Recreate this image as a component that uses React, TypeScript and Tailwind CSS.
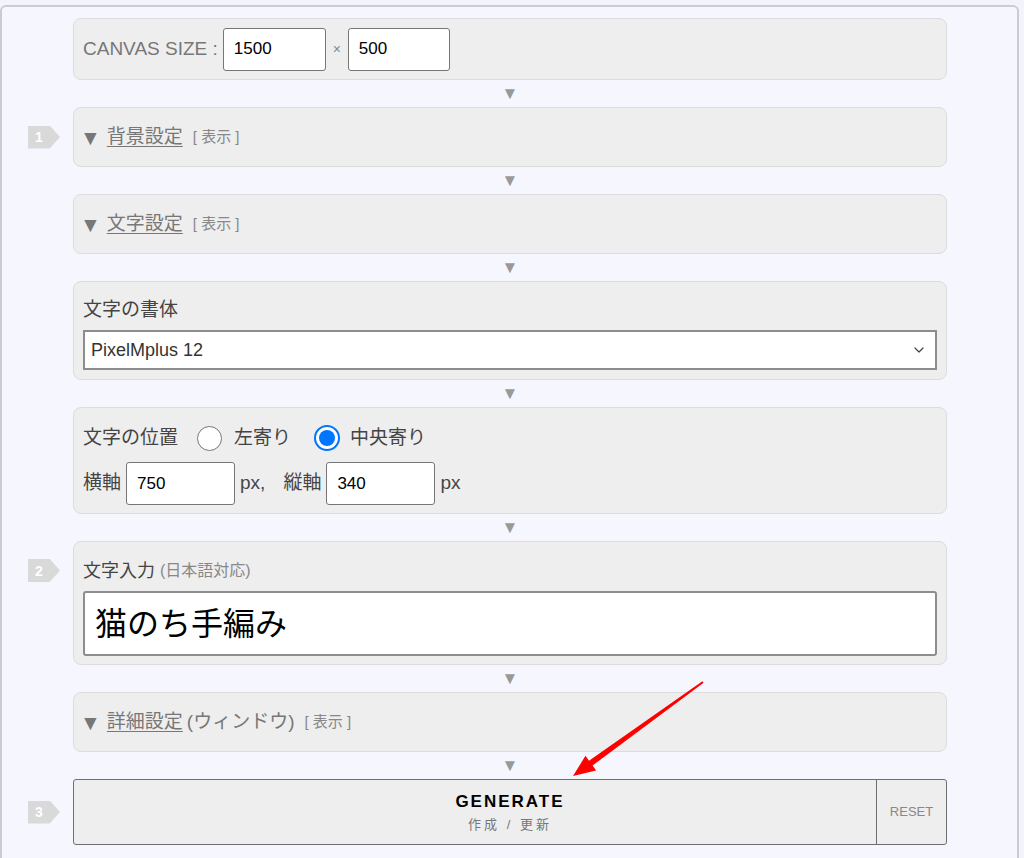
import { ChevronDown } from "lucide-react";

const font = "font-['Liberation_Sans','Noto_Sans_CJK_JP',sans-serif]";

function Badge({ n }: { n: string }) {
  return (
    <div className="w-[32px] h-[23px] bg-[#d9d9d9] [clip-path:polygon(0_0,68%_0,100%_50%,68%_100%,0_100%)] flex items-center pl-[7px] text-white text-[14px] font-bold leading-none">
      {n}
    </div>
  );
}

function Sep() {
  return (
    <div className="flex h-[27px]">
      <div className="w-[71px] shrink-0" />
      <div className="w-[874px] flex items-center justify-center text-[#999] text-[17px] leading-none">▼</div>
    </div>
  );
}

function Row({ badge, top, children }: { badge?: string; top?: boolean; children: React.ReactNode }) {
  return (
    <div className="flex">
      <div className={`w-[71px] shrink-0 flex pl-[26px] ${top ? "items-start pt-[18px]" : "items-center"}`}>
        {badge && <Badge n={badge} />}
      </div>
      {children}
    </div>
  );
}

function Panel({ className = "", children }: { className?: string; children: React.ReactNode }) {
  return (
    <div className={`w-[874px] bg-[#eeeeee] border border-[#dcdcdc] rounded-[8px] px-[9px] ${className}`}>
      {children}
    </div>
  );
}

function Toggle({ title, extra }: { title: string; extra?: string }) {
  return (
    <Panel className="h-[60px] flex items-center">
      <span className="-ml-[3px] text-[#777] text-[21px] leading-none">▼</span>
      <span className="ml-[6px] text-[#777] text-[19px] underline underline-offset-[3px]">{title}</span>
      {extra && <span className="ml-[4px] text-[#777] text-[19px]">{extra}</span>}
      <span className="ml-[10px] text-[#888] text-[15px]">[ 表示 ]</span>
    </Panel>
  );
}

function NumBox({ v, w }: { v: string; w: string }) {
  return (
    <div className={`${w} h-[43px] bg-white border border-[#767676] rounded-[3px] flex items-center pl-[10px] text-[17px] text-black`}>
      {v}
    </div>
  );
}

export default function App() {
  return (
    <div className={`relative w-[1024px] h-[858px] bg-[#f3f4fa] pt-[5px] overflow-hidden ${font}`}>
      <div className="w-[1019px] h-[860px] bg-[#f6f7fe] border-2 border-[#c9ccd4] rounded-[6px] pt-[11px] pb-[9px]">
        <Row>
          <Panel className="h-[62px] flex items-center">
            <span className="text-[#777] text-[19px] mr-[5px]">CANVAS SIZE :</span>
            <div className="w-[103px] h-[43px] bg-white border border-[#767676] rounded-[3px] flex items-center pl-[10px] text-[17px] text-black">1500</div>
            <span className="w-[22px] text-center text-[#888] text-[14px]">×</span>
            <div className="w-[102px] h-[43px] bg-white border border-[#767676] rounded-[3px] flex items-center pl-[10px] text-[17px] text-black">500</div>
          </Panel>
        </Row>
        <Sep />
        <Row badge="1">
          <Toggle title="背景設定" />
        </Row>
        <Sep />
        <Row>
          <Toggle title="文字設定" />
        </Row>
        <Sep />
        <Row>
          <Panel className="h-[99px] pt-[9px]">
            <div className="h-[39px] flex items-center text-[#444] text-[19px]">文字の書体</div>
            <div className="h-[40px] bg-white border-2 border-[#8d8d8d] flex items-center justify-between pl-[6px] pr-[8px] text-[18px] text-[#333]">
              <span>PixelMplus 12</span>
              <ChevronDown size={16} strokeWidth={1.8} className="text-[#444]" />
            </div>
          </Panel>
        </Row>
        <Sep />
        <Row>
          <Panel className="h-[107px] pt-[10px]">
            <div className="h-[40px] flex items-center text-[#444] text-[19px]">
              <span>文字の位置</span>
              <span className="ml-[19px] w-[25px] h-[25px] rounded-full border-[1.5px] border-[#767676] bg-white" />
              <span className="ml-[12px]">左寄り</span>
              <span className="ml-[23px] w-[26px] h-[26px] rounded-full border-2 border-[#0075ff] bg-white flex items-center justify-center">
                <span className="w-[16px] h-[16px] rounded-full bg-[#0075ff]" />
              </span>
              <span className="ml-[10px]">中央寄り</span>
            </div>
            <div className="mt-[4px] flex items-center text-[#444] text-[19px]">
              <span className="mr-[5px]">横軸</span>
              <NumBox v="750" w="w-[109px]" />
              <span className="ml-[5px]">px,</span>
              <span className="ml-[18px] mr-[5px]">縦軸</span>
              <NumBox v="340" w="w-[109px]" />
              <span className="ml-[5px]">px</span>
            </div>
          </Panel>
        </Row>
        <Sep />
        <Row badge="2" top>
          <Panel className="h-[124px] pt-[9px]">
            <div className="h-[40px] flex items-center">
              <span className="text-[#444] text-[18px]">文字入力</span>
              <span className="ml-[5px] text-[#888] text-[16px]">(日本語対応)</span>
            </div>
            <div className="h-[65px] bg-white border-2 border-[#8d8d8d] rounded-[3px] flex items-center pl-[10px] text-[32px] text-black">
              猫のち手編み
            </div>
          </Panel>
        </Row>
        <Sep />
        <Row>
          <Toggle title="詳細設定" extra="(ウィンドウ)" />
        </Row>
        <Sep />
        <Row badge="3">
          <div className="w-[874px] h-[66px] flex bg-[#eeeeee] border border-[#6f6f6f] rounded-[3px]">
            <div className="flex-1 pl-[70px] flex flex-col items-center justify-center">
              <span className="text-[17px] font-bold tracking-[2px] text-black leading-none">GENERATE</span>
              <span className="mt-[8px] text-[13px] tracking-[3px] text-[#777] leading-none">作成 / 更新</span>
            </div>
            <div className="w-[70px] border-l border-[#6f6f6f] flex items-center justify-center text-[13px] text-[#888]">
              RESET
            </div>
          </div>
        </Row>
      </div>
      <svg className="absolute left-0 top-0 pointer-events-none" width="1024" height="858" viewBox="0 0 1024 858">
        <polygon
          points="703.6,682.8 592.6,765.5 596.1,770.4 573,776 585.5,755.8 589.0,760.7 702.4,681.2"
          fill="#ff0000"
        />
      </svg>
    </div>
  );
}
